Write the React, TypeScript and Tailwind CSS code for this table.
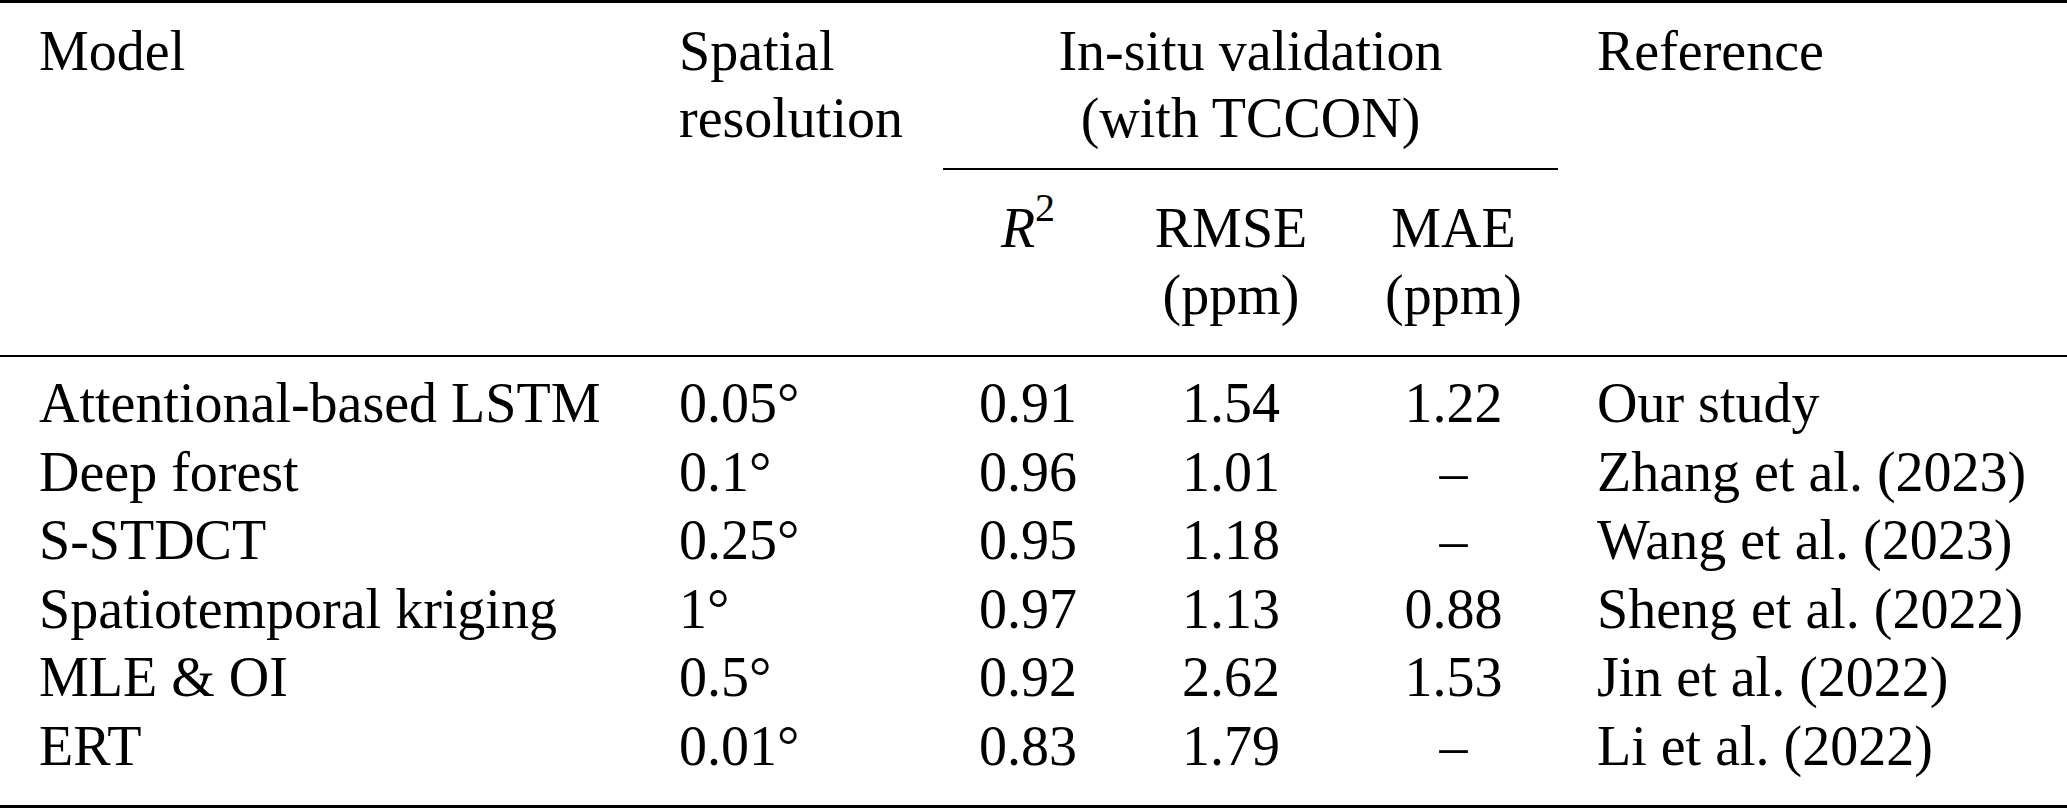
import React from "react";

const rows: string[][] = [
  ["Attentional-based LSTM", "0.05°", "0.91", "1.54", "1.22", "Our study"],
  ["Deep forest", "0.1°", "0.96", "1.01", "–", "Zhang et al. (2023)"],
  ["S-STDCT", "0.25°", "0.95", "1.18", "–", "Wang et al. (2023)"],
  ["Spatiotemporal kriging", "1°", "0.97", "1.13", "0.88", "Sheng et al. (2022)"],
  ["MLE & OI", "0.5°", "0.92", "2.62", "1.53", "Jin et al. (2022)"],
  ["ERT", "0.01°", "0.83", "1.79", "–", "Li et al. (2022)"],
];

const GRID = "grid grid-cols-[679px_264px_170px_236px_209px_509px]";

export default function App() {
  return (
    <div className="w-[2067px] h-[810px] bg-white text-black font-['Liberation_Serif',serif] text-[56px] overflow-hidden">
      {/* top rule */}
      <div className="h-[3px] bg-black" />

      {/* header */}
      <div className={`${GRID} pt-[15px] leading-[67px]`}>
        <div className="pl-[39px]">Model</div>
        <div>
          <div>Spatial</div>
          <div>resolution</div>
        </div>
        <div className="col-span-3 text-center">
          <div>In-situ validation</div>
          <div>(with TCCON)</div>
        </div>
        <div className="pl-[39px]">Reference</div>

        <div className="col-start-3 col-span-3 mt-[16px] h-[2px] bg-black" />

        <div className="col-start-3 mt-[25px] text-center">
          <span className="italic">R</span>
          <span className="text-[40px] leading-[0] align-[26px]">2</span>
        </div>
        <div className="mt-[25px] text-center">
          <div>RMSE</div>
          <div>(ppm)</div>
        </div>
        <div className="mt-[25px] text-center">
          <div>MAE</div>
          <div>(ppm)</div>
        </div>
      </div>

      {/* mid rule */}
      <div className="mt-[26px] h-[2px] bg-black" />

      {/* body */}
      <div className="pt-[12px] leading-[68.6px]">
        {rows.map((r, i) => (
          <div key={i} className={GRID}>
            <div className="pl-[39px] whitespace-nowrap">{r[0]}</div>
            <div className="whitespace-nowrap">{r[1]}</div>
            <div className="text-center">{r[2]}</div>
            <div className="text-center">{r[3]}</div>
            <div className="text-center">{r[4]}</div>
            <div className="pl-[39px] whitespace-nowrap">{r[5]}</div>
          </div>
        ))}
      </div>

      {/* bottom rule */}
      <div className="mt-[24px] h-[3px] bg-black" />
    </div>
  );
}
